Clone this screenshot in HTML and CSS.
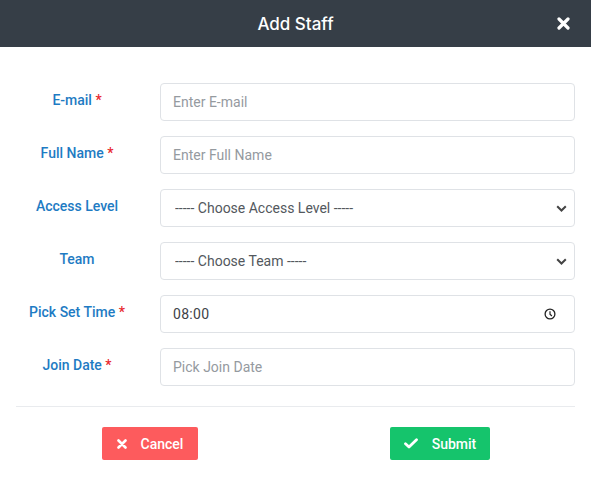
FILE: index.html
```html
<!DOCTYPE html>
<html>
<head>
<meta charset="utf-8">
<link rel="stylesheet" href="styles.css">
</head>
<body>
<div class="modal">
  <div class="header">
    <div class="spacer"></div>
    <div class="title">Add Staff</div>
    <div class="close">
      <svg width="13" height="13" viewBox="0 0 13 13"><path d="M2 2 L11 11 M11 2 L2 11" stroke="#fff" stroke-width="3.2" stroke-linecap="round"/></svg>
    </div>
  </div>
  <form class="form">
    <div class="row">
      <label class="label">E-mail <span class="req">*</span></label>
      <div class="field"><input class="control" type="text" placeholder="Enter E-mail"></div>
    </div>
    <div class="row">
      <label class="label">Full Name <span class="req">*</span></label>
      <div class="field"><input class="control" type="text" placeholder="Enter Full Name"></div>
    </div>
    <div class="row">
      <label class="label">Access Level</label>
      <div class="field">
        <select class="control sel"><option>----- Choose Access Level -----</option></select>
        <svg class="chev" width="11" height="7" viewBox="0 0 11 7"><path d="M1.2 1.2 L5.5 5.5 L9.8 1.2" fill="none" stroke="#444" stroke-width="2"/></svg>
      </div>
    </div>
    <div class="row">
      <label class="label">Team</label>
      <div class="field">
        <select class="control sel"><option>----- Choose Team -----</option></select>
        <svg class="chev" width="11" height="7" viewBox="0 0 11 7"><path d="M1.2 1.2 L5.5 5.5 L9.8 1.2" fill="none" stroke="#444" stroke-width="2"/></svg>
      </div>
    </div>
    <div class="row">
      <label class="label">Pick Set Time <span class="req">*</span></label>
      <div class="field">
        <input class="control val" type="text" value="08:00">
        <svg class="clock" width="12" height="12" viewBox="0 0 12 12"><circle cx="6" cy="6" r="4.9" fill="none" stroke="#222" stroke-width="1.3"/><path d="M6 3.2 V6.2 L7.9 8" fill="none" stroke="#222" stroke-width="1.2"/></svg>
      </div>
    </div>
    <div class="row">
      <label class="label">Join Date <span class="req">*</span></label>
      <div class="field"><input class="control" type="text" placeholder="Pick Join Date"></div>
    </div>
  </form>
  <div class="divider"></div>
  <div class="actions">
    <button class="btn cancel" type="button">
      <svg width="10" height="10" viewBox="0 0 10 10"><path d="M1.5 1.5 L8.5 8.5 M8.5 1.5 L1.5 8.5" stroke="#fff" stroke-width="2.6" stroke-linecap="round"/></svg>
      <span>Cancel</span>
    </button>
    <button class="btn submit" type="button">
      <svg width="14" height="11" viewBox="0 0 14 11"><path d="M1.5 5.8 L5 9 L12.5 1.8" fill="none" stroke="#fff" stroke-width="2.8" stroke-linecap="round" stroke-linejoin="round"/></svg>
      <span>Submit</span>
    </button>
  </div>
</div>
</body>
</html>
```
FILE: styles.css
```css
* { box-sizing: border-box; }
html, body { margin: 0; padding: 0; background: #fff; }
body { font-family: Roboto, "Liberation Sans", sans-serif; width: 591px; height: 480px; overflow: hidden; }
.modal { width: 591px; }
.header {
  height: 47px;
  background: #363e47;
  display: flex;
  align-items: center;
  padding: 0 21px;
}
.spacer { width: 13px; flex: none; }
.title {
  flex: 1;
  text-align: center;
  color: #fff;
  font-family: Inter, Roboto, sans-serif;
  font-weight: 500;
  font-size: 17px;
  line-height: 20px;
}
.close { display: flex; flex: none; margin-top: 0; }
.form {
  padding: 36px 16px 0 0;
  display: flex;
  flex-direction: column;
  gap: 15px;
}
.row { display: flex; align-items: flex-start; }
.label {
  width: 154px;
  margin-right: 6px;
  text-align: center;
  color: #1e7bc3;
  font-weight: 500;
  font-size: 14px;
  line-height: 20px;
  padding-top: 7px;
}
.req { color: #e8272e; }
.field {
  flex: 1;
  height: 38px;
  border: 1px solid #dfe2e6;
  border-radius: 4px;
  display: flex;
  align-items: center;
  background: #fff;
}
.control {
  flex: 1;
  min-width: 0;
  height: 100%;
  border: 0;
  outline: 0;
  background: transparent;
  font-family: Roboto, "Liberation Sans", sans-serif;
  font-size: 14px;
  color: #495057;
  padding: 0 12px;
}
.control::placeholder { color: #959a9f; }
.sel {
  appearance: none;
  -webkit-appearance: none;
  color: #53585d;
  padding-left: 14px;
}
.val { color: #3d4247; letter-spacing: 0.3px; }
.chev { margin-right: 7px; flex: none; }
.clock { margin-right: 18px; flex: none; }
.divider {
  margin: 20px 16px 0 16px;
  border-top: 1px solid #e9ebee;
}
.actions {
  display: flex;
  justify-content: center;
  gap: 192px;
  padding-top: 20px;
  padding-left: 1px;
}
.btn {
  height: 33px;
  border: 0;
  border-radius: 2px;
  color: #fff;
  font-family: Roboto, "Liberation Sans", sans-serif;
  font-size: 14px;
  font-weight: 500;
  display: flex;
  align-items: center;
  justify-content: center;
  gap: 14px;
  padding: 0;
}
.cancel { width: 96px; background: #fd5b5d; }
.submit { width: 100px; background: #15c46c; }
```
